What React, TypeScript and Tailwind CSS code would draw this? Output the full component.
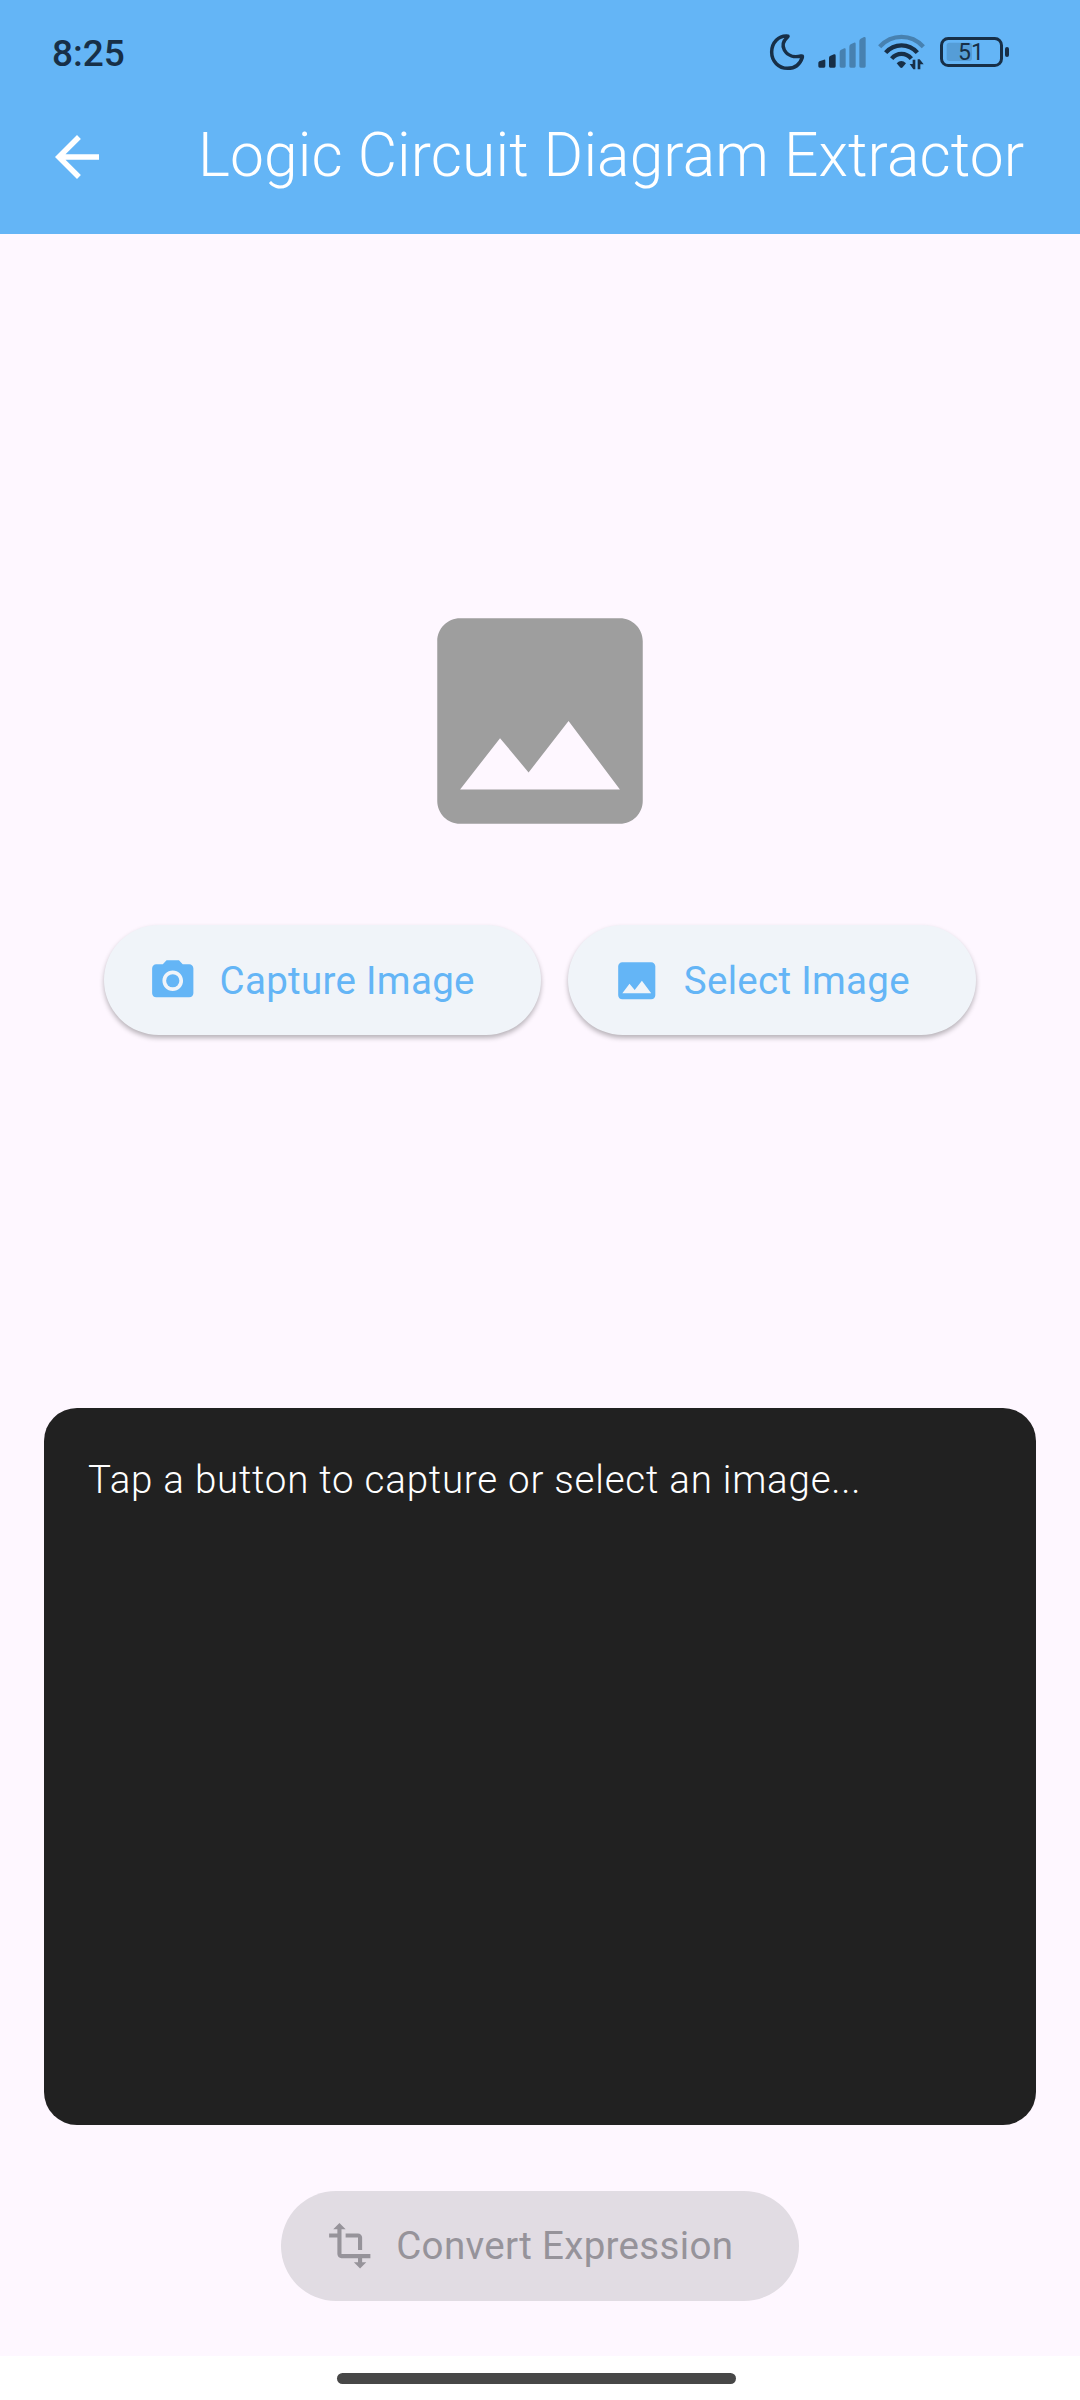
import { MdArrowBack, MdCameraAlt, MdImage, MdTransform } from "react-icons/md";

function MoonIcon() {
  return (
    <svg className="h-[38px] w-[36px]" viewBox="87 69 108 114" fill="none">
      <path
        d="M142 78C116 76 95 98 95 126C95 154 116 175 143 175C164 175 180 163 187 142C188 138 187 137 183 138C163 143 143 138 133 120C126 107 129 94 142 82C145 79 145 78 142 78Z"
        stroke="#172f47"
        strokeWidth="10.5"
        strokeLinejoin="round"
      />
    </svg>
  );
}

function SignalIcon() {
  return (
    <svg className="h-[32px] w-[48px]" viewBox="234 79 144 96">
      <path
        d="M235 160Q235 157 238 155L252 150Q256 149 256 153V170Q256 174 252 174H239Q235 174 235 170ZM267 145Q267 141 270 139L282 134Q287 133 287 138V170Q287 174 283 174H271Q267 174 267 170Z"
        fill="#172f47"
      />
      <path
        d="M299 128Q299 123 302 121L313 116Q317 115 317 119V170Q317 174 313 174H303Q299 174 299 170ZM328 111Q328 106 332 104L342 99Q347 98 347 102V170Q347 174 343 174H332Q328 174 328 170ZM358 94Q358 89 362 87L372 82Q377 81 377 86V170Q377 174 373 174H362Q358 174 358 170Z"
        fill="#4781b0"
      />
    </svg>
  );
}

function WifiIcon() {
  return (
    <svg className="h-[36px] w-[47px]" viewBox="415 75 141 108" fill="none">
      <path d="M420 113C457 74 514 74 551 113" stroke="#4781b0" strokeWidth="13" />
      <path d="M438 131C464 102 507 102 533 131" stroke="#172f47" strokeWidth="13" />
      <path d="M456 149C472 130 499 130 515 149" stroke="#172f47" strokeWidth="13" />
      <path d="M471 163Q485 149 499 163L489 175Q485 179 481 175Z" fill="#172f47" />
      <path d="M510 165H519V152H527V181H521ZM534 181V151H540L552 166H542V181Z" fill="#172f47" />
    </svg>
  );
}

function BatteryIcon() {
  return (
    <div className="relative h-[30px] w-[69px]">
      <svg className="block h-[30px] w-[69px]" viewBox="600 81 207 90" fill="none">
        <rect x="620" y="98" width="76" height="55" rx="8" fill="#559dd7" />
        <rect x="604.5" y="85.5" width="180" height="81" rx="20" stroke="#172f47" strokeWidth="9" />
        <rect x="795" y="111" width="12" height="30" rx="6" fill="#172f47" />
      </svg>
      <span className="absolute left-[18px] top-[4px] text-[23px] leading-[24px] text-[#172f47]">51</span>
    </div>
  );
}

export default function App() {
  return (
    <div className="flex h-[2400px] w-[1080px] flex-col overflow-hidden bg-[#fef7ff] font-[Roboto,sans-serif]">
      <header className="h-[234px] shrink-0 bg-[#64b5f6]">
        <div className="flex h-[80px] items-start justify-between pl-[52px] pr-[71px] pt-[32px]">
          <span className="text-[37px] font-medium leading-[44px] text-[#172f47]">8:25</span>
          <div className="flex items-center pt-px">
            <MoonIcon />
            <div className="ml-[13px]"><SignalIcon /></div>
            <div className="ml-[12px]"><WifiIcon /></div>
            <div className="ml-[15px]"><BatteryIcon /></div>
          </div>
        </div>
        <div className="flex h-[154px] items-center pl-[44px]">
          <MdArrowBack className="size-[66px] text-white" />
          <h1 className="mb-1 ml-[88px] whitespace-nowrap text-[60.5px] font-light leading-[77px] tracking-[0.125px] text-white">
            Logic Circuit Diagram Extractor
          </h1>
        </div>
      </header>

      <main className="flex flex-1 flex-col items-center">
        <MdImage className="mt-[350px] size-[274px] shrink-0 text-[#9e9e9e]" />
        <div className="mt-[67.4px] flex gap-[27.5px]">
          <button className="flex h-[110px] items-center gap-[22px] rounded-full bg-[#f0f4f9] pl-[44px] pr-[66px] text-[38.5px] leading-[55px] tracking-[0.3px] text-[#64b5f6] shadow-[0_3px_5px_rgba(0,0,0,0.28)]">
            <MdCameraAlt className="size-[49.5px]" />
            <span className="whitespace-nowrap">Capture Image</span>
          </button>
          <button className="flex h-[110px] items-center gap-[22px] rounded-full bg-[#f0f4f9] pl-[44px] pr-[66px] text-[38.5px] leading-[55px] tracking-[0.3px] text-[#64b5f6] shadow-[0_3px_5px_rgba(0,0,0,0.28)]">
            <MdImage className="size-[49.5px]" />
            <span className="whitespace-nowrap">Select Image</span>
          </button>
        </div>
        <section className="mt-[372.8px] h-[716.5px] w-[992px] shrink-0 rounded-[33px] bg-[#212121] p-[44px]">
          <p className="whitespace-nowrap text-[38.5px] font-light leading-[55px] tracking-[0.77px] text-white">
            Tap a button to capture or select an image...
          </p>
        </section>
        <button className="mt-[66px] flex h-[110px] items-center gap-[22px] rounded-full bg-[#e1dce3] pl-[44px] pr-[66px] text-[38.5px] leading-[55px] tracking-[0.32px] text-[#96939a]">
          <MdTransform className="size-[49.5px]" />
          <span className="whitespace-nowrap">Convert Expression</span>
        </button>
      </main>

      <footer className="flex h-[44px] shrink-0 justify-center bg-white pt-[17px]">
        <div className="mr-[7px] h-[11px] w-[399px] rounded-full bg-[#474747]" />
      </footer>
    </div>
  );
}
